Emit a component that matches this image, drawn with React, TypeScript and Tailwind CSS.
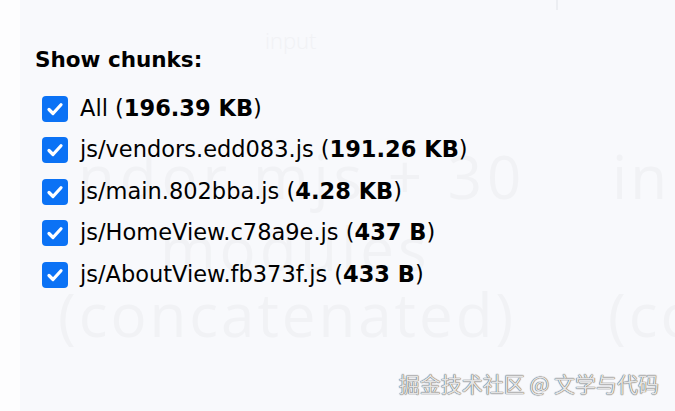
import React from "react";

type Chunk = { label: string; size: string };

const CHUNKS: Chunk[] = [
  { label: "All", size: "196.39 KB" },
  { label: "js/vendors.edd083.js", size: "191.26 KB" },
  { label: "js/main.802bba.js", size: "4.28 KB" },
  { label: "js/HomeView.c78a9e.js", size: "437 B" },
  { label: "js/AboutView.fb373f.js", size: "433 B" },
];

const CheckBox = () => (
  <span className="flex h-[26px] w-[26px] shrink-0 items-center justify-center rounded-[4px] bg-[#0b72f5]">
    <svg viewBox="0 0 16 16" className="h-[20px] w-[20px]">
      <path
        d="M3.2 8.4 L6.4 11.6 L12.8 4.6"
        fill="none"
        stroke="#fff"
        strokeWidth="2.6"
        strokeLinecap="round"
        strokeLinejoin="round"
      />
    </svg>
  </span>
);

export default function App() {
  return (
    <div
      className="relative h-[411px] w-[675px] overflow-hidden bg-[#f8f9fc] text-black"
      style={{ fontFamily: '"DejaVu Sans", Verdana, sans-serif' }}
    >
      {/* treemap labels showing through the sidebar */}
      <div
        className="pointer-events-none absolute inset-0 text-[#f1f2f5]"
        style={{ fontFamily: '"Open Sans", sans-serif' }}
      >
        <div className="absolute left-[556px] top-0 h-[10px] w-[2px] bg-[#eceef2]" />
        <div className="absolute left-[265px] top-[24px] text-[22px] font-light">input</div>
        <div className="absolute left-[78px] top-[146px] text-[60px] leading-none tracking-[5px]">ndor.mjs + 30</div>
        <div className="absolute left-[612px] top-[146px] text-[60px] leading-none tracking-[3px]">in</div>
        <div className="absolute left-[160px] top-[218px] text-[60px] leading-none tracking-[4px]">modules</div>
        <div className="absolute left-[58px] top-[284px] text-[60px] leading-none tracking-[3px]">(concatenated)</div>
        <div className="absolute left-[608px] top-[284px] text-[60px] leading-none tracking-[3px]">(co</div>
      </div>

      <div className="relative flex h-full">
        <div className="w-[20px] bg-[#fdfdfe]" />
        <div className="flex-1 pl-[15px] pt-[47px]">
          <div className="text-[21.5px] font-bold leading-[26px]">Show chunks:</div>
          <div className="mt-[15px] flex flex-col pl-[7px]">
            {CHUNKS.map((c) => (
              <label key={c.label} className="flex h-[41.5px] items-center gap-[12px] text-[22.5px]">
                <CheckBox />
                <span>
                  {c.label} (<b>{c.size}</b>)
                </span>
              </label>
            ))}
          </div>
        </div>
      </div>

      <div
        className="absolute right-[16px] top-[368px] text-[21px] text-[#e4e4e4]"
        style={{
          fontFamily: '"Noto Sans CJK SC", sans-serif',
          textShadow: "0 0 1px #555, 0 0 1px #555",
        }}
      >
        掘金技术社区 @ 文学与代码
      </div>
    </div>
  );
}
